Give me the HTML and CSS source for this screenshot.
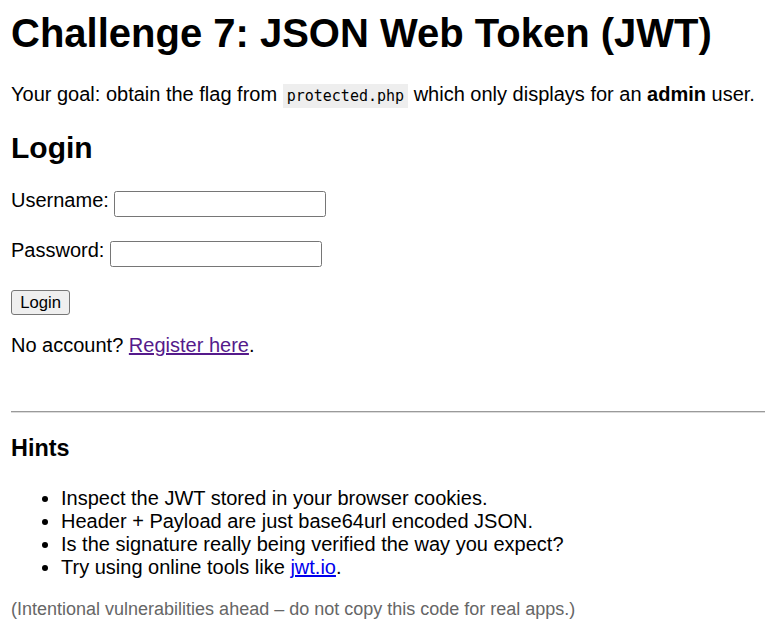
FILE: index.html
```html
<!DOCTYPE html>
<html lang="en">
<head>
<meta charset="utf-8">
<title>Challenge 7: JSON Web Token (JWT)</title>
<link rel="stylesheet" href="styles.css">
</head>
<body>
<h1 class="title">Challenge 7: JSON Web Token (JWT)</h1>
<p class="goal">Your goal: obtain the flag from <code class="code">protected.php</code> which only displays for an <strong>admin</strong> user.</p>

<h2 class="section-title">Login</h2>
<form class="login-form" action="#" method="post">
  <div class="field field-user">
    <label class="field-label" for="username">Username:</label>
    <input class="field-input" type="text" id="username" name="username">
  </div>
  <div class="field field-pass">
    <label class="field-label" for="password">Password:</label>
    <input class="field-input" type="password" id="password" name="password">
  </div>
  <div class="actions">
    <button class="btn" type="submit">Login</button>
  </div>
</form>
<p class="register">No account? <a class="link link-visited" href="#">Register here</a>.</p>

<hr class="divider">

<h3 class="hints-title">Hints</h3>
<ul class="hints">
  <li>Inspect the JWT stored in your browser cookies.</li>
  <li>Header + Payload are just base64url encoded JSON.</li>
  <li>Is the signature really being verified the way you expect?</li>
  <li>Try using online tools like <a class="link" href="#">jwt.io</a>.</li>
</ul>
<p class="note">(Intentional vulnerabilities ahead – do not copy this code for real apps.)</p>
</body>
</html>
```
FILE: styles.css
```css
html, body {
  background: #ffffff;
}

body {
  margin: 0;
  padding: 10px 0 0 11px;
  font-family: "Liberation Sans", Arial, sans-serif;
  font-size: 20px;
  line-height: 23px;
  color: #000000;
}

.title {
  margin: 0;
  font-size: 40px;
  line-height: 46px;
  font-weight: bold;
}

.goal {
  margin: 27px 0 0;
}

.code {
  font-family: "DejaVu Sans Mono", "Liberation Mono", monospace;
  font-size: 15px;
  background: #eeeeee;
  padding: 3.25px 4px;
}

.section-title {
  margin: 23px 0 0;
  font-size: 30px;
  line-height: 34px;
  font-weight: bold;
}

.login-form {
  margin: 0;
}

.field {
  display: flex;
  align-items: flex-start;
  gap: 5.5px;
}

.field-user {
  margin-top: 26px;
}

.field-pass {
  margin-top: 23.5px;
}

.field-label {
  margin-top: -2px;
  line-height: 23px;
}

.field-input {
  box-sizing: border-box;
  width: 212px;
  height: 26px;
  margin: 0;
  padding: 0 3px;
  border: 1px solid #767676;
  border-radius: 2.5px;
  background: #ffffff;
  font-family: "Liberation Sans", Arial, sans-serif;
  font-size: 16.67px;
}

.actions {
  margin-top: 23px;
}

.btn {
  box-sizing: border-box;
  height: 25px;
  margin: 0;
  padding: 0 8.3px;
  border: 1px solid #767676;
  border-radius: 3px;
  background: #efefef;
  color: #000000;
  font-family: "Liberation Sans", Arial, sans-serif;
  font-size: 16.67px;
  line-height: 19px;
}

.register {
  margin: 19px 0 0;
}

.link {
  color: #0000ee;
  text-decoration: underline;
}

.link-visited {
  color: #551a8b;
}

.divider {
  margin: 54.5px 0 0;
  height: 0;
  border: 0;
  border-top: 1px solid #9a9a9a;
  border-bottom: 1px solid #dcdcdc;
}

.hints-title {
  margin: 22px 0 0;
  font-size: 23.4px;
  line-height: 27px;
  font-weight: bold;
}

.hints {
  margin: 24.5px 0 0;
  padding-left: 50px;
}

.note {
  margin: 20.5px 0 0;
  font-size: 18px;
  line-height: 21px;
  color: #666666;
}
```
